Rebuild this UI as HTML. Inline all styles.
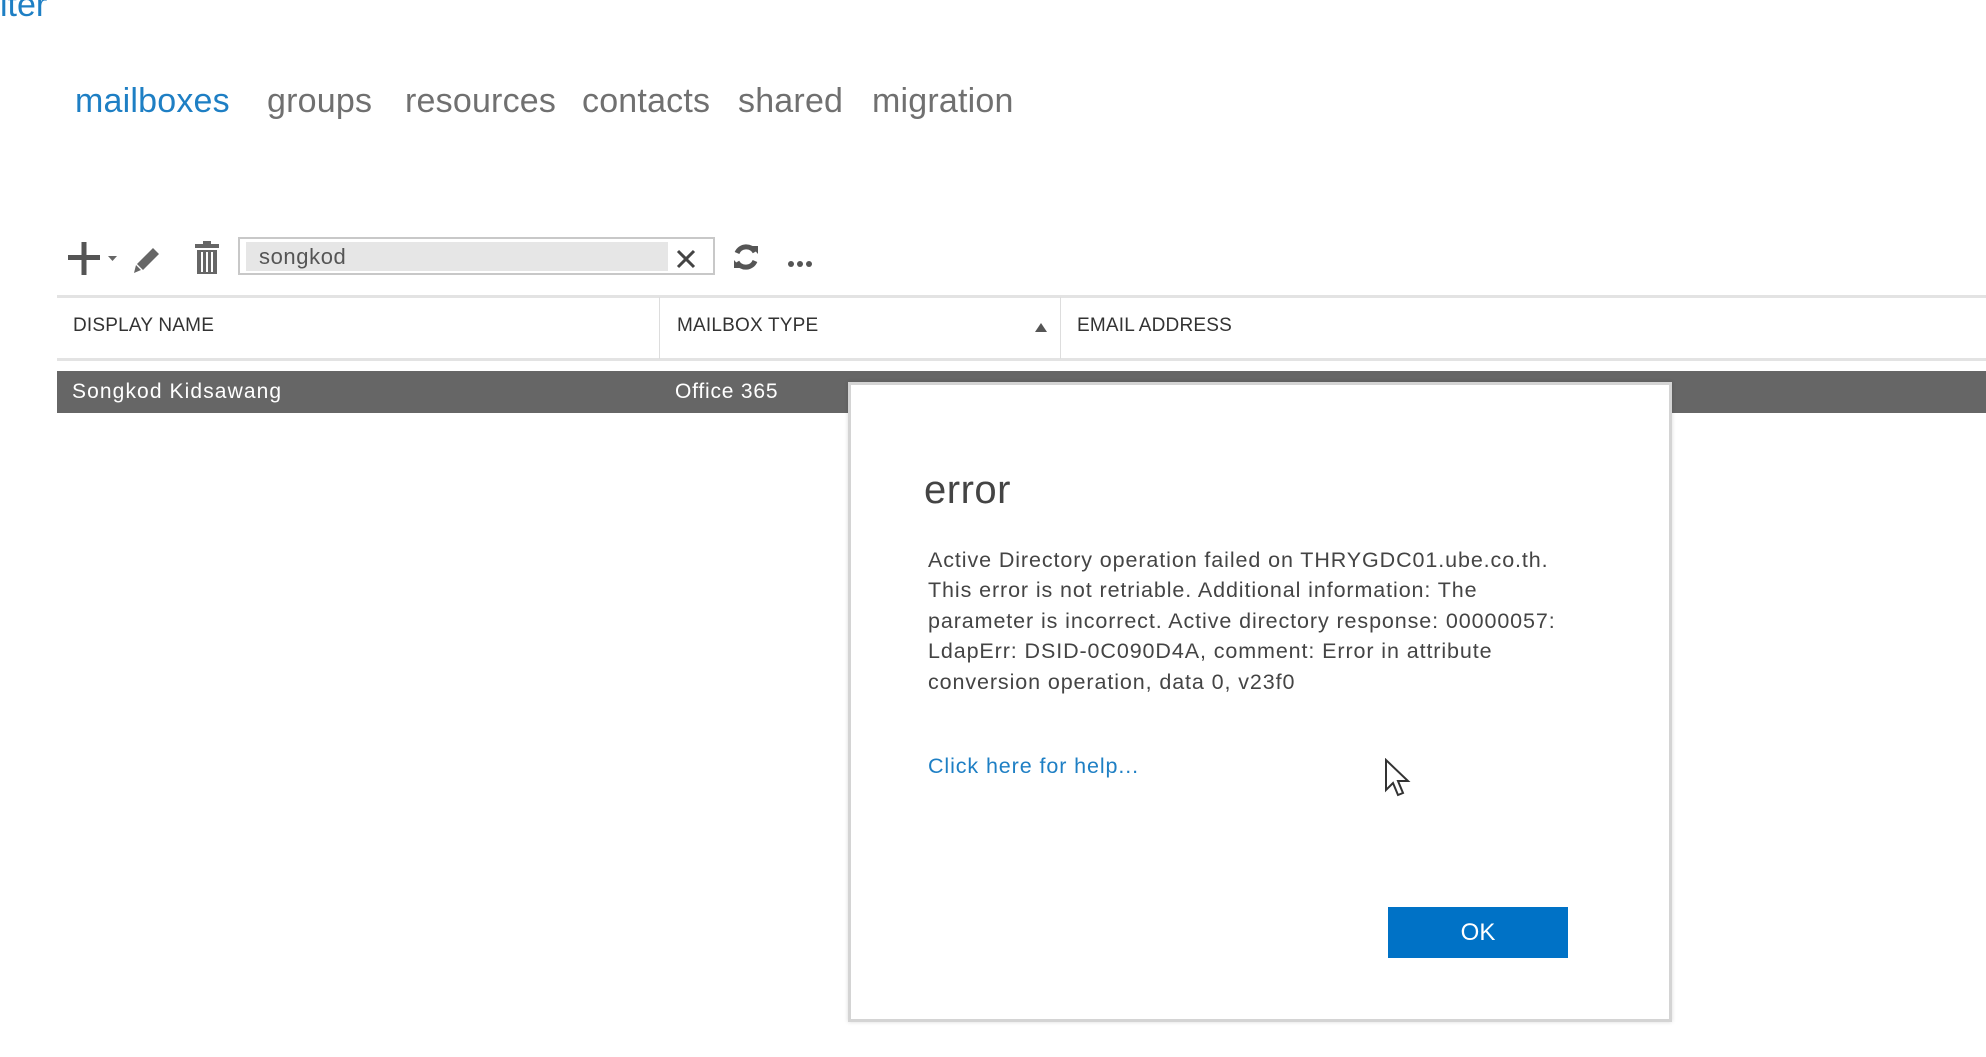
<!DOCTYPE html>
<html><head><style>
body{margin:0;width:1986px;height:1057px;background:#fff;position:relative;overflow:hidden;font-family:"Liberation Sans",sans-serif;}
.a{position:absolute;white-space:nowrap;}
.tab{position:absolute;top:82px;font-size:34px;color:#707070;letter-spacing:0.2px;}
.hd{position:absolute;top:315px;font-size:19px;color:#333;letter-spacing:0.2px;}
.body{position:absolute;left:928px;font-size:21.5px;color:#444;white-space:nowrap;letter-spacing:0.9px;}
</style></head><body>
<div class="a" style="left:0;top:-14px;font-size:34px;color:#1e7fc4;">lter</div>
<div class="tab" style="left:75px;color:#1e7fc4;">mailboxes</div>
<div class="tab" style="left:267px;">groups</div>
<div class="tab" style="left:405px;">resources</div>
<div class="tab" style="left:582px;">contacts</div>
<div class="tab" style="left:738px;">shared</div>
<div class="tab" style="left:872px;">migration</div>

<svg class="a" style="left:60px;top:236px" width="260" height="45">
<rect x="8" y="19" width="32" height="5" fill="#555"/><rect x="21.5" y="6" width="5" height="33" fill="#555"/>
<path d="M48 20 l9 0 l-4.5 5z" fill="#666"/>
<path d="M93 12 l6 6 l-16 16 l-6 -6z M76 29 l5 5 l-7 3z" fill="#666"/>
<rect x="135" y="8" width="24" height="4" fill="#666"/><rect x="143" y="5" width="8" height="4" fill="#666"/>
<rect x="137" y="14" width="20" height="24" fill="#666"/>
<rect x="141" y="16" width="2" height="20" fill="#fff"/><rect x="146" y="16" width="2" height="20" fill="#fff"/><rect x="151" y="16" width="2" height="20" fill="#fff"/>
</svg>
<div class="a" style="left:238px;top:237px;width:477px;height:38px;border:2px solid #c8c8c8;box-sizing:border-box;background:#fff;"></div>
<div class="a" style="left:246px;top:242px;width:422px;height:29px;background:#e6e6e6;"></div>
<div class="a" style="left:259px;top:242px;font-size:22px;color:#555;line-height:29px;letter-spacing:0.6px">songkod</div>
<svg class="a" style="left:675px;top:248px" width="22" height="22"><path d="M3 3 L19 19 M19 3 L3 19" stroke="#444" stroke-width="3"/></svg>
<svg class="a" style="left:731px;top:241px" width="30" height="32"><path d="M24 11 A10 10 0 0 0 6 12 M6 21 A10 10 0 0 0 24 20" stroke="#555" stroke-width="5" fill="none"/><path d="M20 5 l7 0 l0 8z M10 27 l-7 0 l0-8z" fill="#555"/></svg>
<div class="a" style="left:788px;top:254px;"><span style="display:inline-block;width:6px;height:6px;background:#555;border-radius:3px;margin-right:3px"></span><span style="display:inline-block;width:6px;height:6px;background:#555;border-radius:3px;margin-right:3px"></span><span style="display:inline-block;width:6px;height:6px;background:#555;border-radius:3px"></span></div>

<div class="a" style="left:57px;top:295px;width:1929px;height:3px;background:#e3e3e3"></div>
<div class="a" style="left:57px;top:358px;width:1929px;height:3px;background:#e3e3e3"></div>
<div class="a" style="left:659px;top:297px;width:1px;height:62px;background:#ddd"></div>
<div class="a" style="left:1060px;top:297px;width:1px;height:62px;background:#ddd"></div>
<div class="hd" style="left:73px;">DISPLAY NAME</div>
<div class="hd" style="left:677px;">MAILBOX TYPE</div>
<div class="hd" style="left:1077px;">EMAIL ADDRESS</div>
<svg class="a" style="left:1034px;top:321px" width="14" height="12"><path d="M1 11 L7 2 L13 11z" fill="#555"/></svg>
<div class="a" style="left:57px;top:371px;width:1929px;height:42px;background:#666"></div>
<div class="a" style="left:72px;top:380px;font-size:21px;color:#fff;letter-spacing:1.1px">Songkod Kidsawang</div>
<div class="a" style="left:675px;top:380px;font-size:21px;color:#fff;letter-spacing:0.8px">Office 365</div>

<div class="a" style="left:848px;top:382px;width:824px;height:640px;background:#fff;border:3px solid #d4d4d4;box-sizing:border-box;box-shadow:0 0 4px rgba(0,0,0,0.15)"></div>
<div class="a" style="left:924px;top:468px;font-size:40px;color:#444;letter-spacing:0.5px">error</div>
<div class="body" style="top:548px">Active Directory operation failed on THRYGDC01.ube.co.th.</div>
<div class="body" style="top:578px">This error is not retriable. Additional information: The</div>
<div class="body" style="top:609px">parameter is incorrect. Active directory response: 00000057:</div>
<div class="body" style="top:639px">LdapErr: DSID-0C090D4A, comment: Error in attribute</div>
<div class="body" style="top:670px">conversion operation, data 0, v23f0</div>
<div class="body" style="top:754px;color:#1e7fc4">Click here for help...</div>
<div class="a" style="left:1388px;top:907px;width:180px;height:51px;background:#0072c6;color:#fff;font-size:24px;text-align:center;line-height:51px">OK</div>
<svg class="a" style="left:1384px;top:758px" width="30" height="44"><path d="M2 2 L2 32 L9 25 L14 37 L19 35 L14 23 L24 23 Z" fill="#fff" stroke="#333" stroke-width="2"/></svg>
</body></html>
